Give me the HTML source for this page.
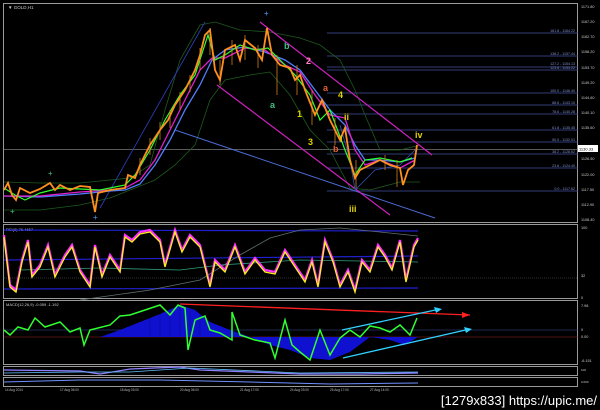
<!DOCTYPE html>
<html><head><meta charset="utf-8"><style>
html,body{margin:0;padding:0;background:#000;width:600px;height:410px;overflow:hidden}
svg{display:block}
text{font-family:"Liberation Sans",sans-serif}
</style></head><body>
<svg width="600" height="410" viewBox="0 0 600 410" xmlns="http://www.w3.org/2000/svg">
<rect width="600" height="410" fill="#000"/>
<g fill="none" stroke="#9a9a9a" stroke-width="1">
<rect x="3.5" y="3.5" width="574" height="219"/>
<rect x="3.5" y="224.5" width="574" height="74"/>
<rect x="3.5" y="300.5" width="574" height="64"/>
<rect x="3.5" y="366.5" width="574" height="9"/>
<rect x="3.5" y="377.5" width="574" height="9"/>
</g>
<text x="8" y="9" font-size="4.5" fill="#ccc">▼ GOLD,H1</text>
<line x1="4" y1="149.5" x2="578" y2="149.5" stroke="#777" stroke-width="0.7"/>
<g stroke="#4050a0" stroke-width="0.8">
<line x1="327" y1="33" x2="578" y2="33"/><line x1="327" y1="56" x2="578" y2="56"/>
<line x1="327" y1="67" x2="578" y2="67"/><line x1="327" y1="70" x2="578" y2="70"/>
<line x1="327" y1="93" x2="578" y2="93"/><line x1="327" y1="105" x2="578" y2="105"/>
<line x1="327" y1="114" x2="578" y2="114"/><line x1="327" y1="130" x2="578" y2="130"/>
<line x1="327" y1="142" x2="578" y2="142"/><line x1="327" y1="154" x2="578" y2="154"/>
<line x1="327" y1="168" x2="578" y2="168"/><line x1="327" y1="191" x2="578" y2="191"/>
</g>
<g font-size="3.6" fill="#8090d0" text-anchor="end">
<text x="575" y="32">161.8 - 1164.22</text><text x="575" y="55">138.2 - 1157.44</text>
<text x="575" y="65">127.2 - 1154.13</text><text x="575" y="69">123.6 - 1153.22</text>
<text x="575" y="92">100.0 - 1146.40</text><text x="575" y="104">88.6 - 1143.10</text>
<text x="575" y="113">78.6 - 1140.28</text><text x="575" y="129">61.8 - 1135.45</text>
<text x="575" y="141">50.0 - 1132.01</text><text x="575" y="153">38.2 - 1128.62</text>
<text x="575" y="167">23.6 - 1124.40</text><text x="575" y="190">0.0 - 1117.62</text>
</g>
<g font-size="3.8" fill="#ccc">
<text x="581" y="8">1171.80</text><text x="581" y="23">1167.20</text><text x="581" y="38">1162.70</text>
<text x="581" y="53">1158.20</text><text x="581" y="69">1153.70</text><text x="581" y="84">1149.20</text>
<text x="581" y="99">1144.60</text><text x="581" y="114">1140.10</text><text x="581" y="129">1135.60</text>
<text x="581" y="160">1126.50</text><text x="581" y="176">1122.00</text><text x="581" y="191">1117.50</text>
<text x="581" y="206">1112.90</text><text x="581" y="221">1108.40</text>
<text x="581" y="229">100</text><text x="581" y="277">32</text><text x="581" y="299">0</text>
<text x="581" y="307">7.98</text><text x="581" y="331">0</text><text x="581" y="338">0.00</text><text x="581" y="362">-6.151</text>
</g>
<rect x="578" y="145" width="20" height="7" fill="#fff"/>
<text x="579" y="150.5" font-size="4" fill="#000">1130.33</text>
<polyline fill="none" stroke="#1e5a1e" stroke-width="0.8" points="4,182 40,183 80,183 110,180 130,178 150,165 165,110 180,60 200,25 215,22 240,30 270,32 300,38 320,45 340,60 355,90 365,115 380,150 400,150 420,145"/>
<polyline fill="none" stroke="#1e5a1e" stroke-width="0.8" points="4,210 40,210 80,205 110,198 130,190 155,180 175,165 195,145 210,100 225,80 250,75 270,72 290,95 310,130 330,150 350,188 370,190 400,182 420,182"/>
<line x1="100" y1="208" x2="205" y2="22" stroke="#3040c0" stroke-width="0.8"/>
<line x1="175" y1="130" x2="435" y2="218" stroke="#4a6ad0" stroke-width="1"/>
<line x1="260" y1="22" x2="432" y2="155" stroke="#d020c0" stroke-width="1.2"/>
<line x1="217" y1="85" x2="390" y2="215" stroke="#d020c0" stroke-width="1.2"/>
<polyline fill="none" stroke="#3050b0" stroke-width="0.8" points="340,125 350,160 355,190 375,170 400,165 415,150"/>
<polyline fill="none" stroke="#5080ff" stroke-width="1.3" points="4,196 40,197 80,194 110,191 125,190 140,184 155,165 170,140 185,110 200,85 212,60 225,50 245,47 265,52 285,60 300,70 315,90 330,110 345,125 355,145 365,160 380,160 400,162 415,158"/>
<polyline fill="none" stroke="#e020d0" stroke-width="1.3" points="4,196 40,196 80,192 110,190 125,188 140,180 155,160 170,130 185,100 200,70 212,58 225,58 245,48 265,50 285,65 300,72 315,95 330,115 345,118 355,150 365,165 380,160 400,168 415,160"/>
<polyline fill="none" stroke="#30ff30" stroke-width="1.2" points="4,188 15,195 25,200 40,193 60,188 80,189 100,190 125,185 135,175 150,150 165,120 180,95 195,75 208,35 215,60 225,55 240,45 255,50 268,48 280,60 295,75 310,95 320,120 330,110 345,150 355,175 365,160 380,158 400,162 412,158"/>
<g stroke="#d08020" stroke-width="0.8">
<line x1="140" y1="158" x2="140" y2="175"/><line x1="150" y1="138" x2="150" y2="155"/><line x1="160" y1="122" x2="160" y2="140"/>
<line x1="170" y1="110" x2="170" y2="128"/><line x1="180" y1="92" x2="180" y2="110"/><line x1="190" y1="75" x2="190" y2="92"/>
<line x1="200" y1="48" x2="200" y2="70"/><line x1="210" y1="28" x2="210" y2="55"/><line x1="220" y1="60" x2="220" y2="85"/>
<line x1="232" y1="40" x2="232" y2="65"/><line x1="245" y1="35" x2="245" y2="60"/><line x1="258" y1="45" x2="258" y2="68"/>
<line x1="277" y1="55" x2="277" y2="95"/><line x1="297" y1="65" x2="297" y2="95"/><line x1="312" y1="90" x2="312" y2="125"/>
<line x1="335" y1="118" x2="335" y2="145"/><line x1="356" y1="160" x2="356" y2="188"/><line x1="385" y1="155" x2="385" y2="170"/>
<line x1="397" y1="160" x2="397" y2="187"/>
</g>
<polyline fill="none" stroke="#ff9020" stroke-width="1.8" points="4,190 8,183 12,195 16,200 20,188 30,193 40,189 50,183 55,190 60,185 70,190 80,186 90,187 95,212 98,193 110,190 125,188 128,175 135,178 140,165 150,145 160,130 168,120 175,105 185,90 195,70 200,55 205,35 210,30 215,70 220,80 225,50 235,45 240,60 245,40 255,48 262,60 267,28 272,55 280,65 290,68 295,80 300,75 305,90 315,115 322,100 330,120 340,140 345,128 350,160 355,178 360,170 370,165 380,160 390,165 400,168 403,185 408,170 414,165 417,145"/>
<g font-family="Liberation Serif,serif" font-size="9" font-weight="bold">
<text x="284" y="49" fill="#40c080">b</text><text x="270" y="108" fill="#40c080">a</text>
<text x="306" y="64" fill="#ff80c0">2</text><text x="297" y="117" fill="#e0d000">1</text>
<text x="308" y="145" fill="#e0d000">3</text><text x="323" y="91" fill="#e06030">a</text>
<text x="338" y="98" fill="#e0d000">4</text><text x="344" y="120" fill="#e0d000">ii</text>
<text x="340" y="142" fill="#e0d000">i</text><text x="333" y="152" fill="#e06030">b</text>
<text x="349" y="212" fill="#e0d000">iii</text><text x="415" y="138" fill="#e0d000">iv</text>
</g>
<text x="264" y="16" font-size="8" fill="#4aa0ff">+</text>
<text x="93" y="220" font-size="8" fill="#4aa0ff">+</text>
<text x="48" y="176" font-size="8" fill="#40c080">+</text>
<text x="10" y="214" font-size="8" fill="#40c080">+</text>
<text x="6" y="231" font-size="4" fill="#ccc">RSI(8) 76.4667</text>
<g stroke="#2020d0" stroke-width="1.2" fill="none">
<line x1="4" y1="230" x2="418" y2="231"/><line x1="4" y1="260" x2="418" y2="256"/>
<line x1="4" y1="289" x2="418" y2="288"/>
</g>
<line x1="4" y1="278" x2="578" y2="278" stroke="#666" stroke-dasharray="1,1" stroke-width="0.5"/>
<polyline fill="none" stroke="#607070" stroke-width="0.8" points="80,300 150,290 200,280 240,255 270,238 300,230 340,228 380,232 418,236"/>
<polyline fill="none" stroke="#30a080" stroke-width="0.8" points="20,270 100,268 180,270 220,265 300,260 418,262"/>
<polyline fill="none" stroke="#ff30ff" stroke-width="2.2" points="4,235 10,285 16,290 22,260 28,240 32,275 40,265 48,245 55,275 65,255 72,245 80,270 90,285 95,245 102,275 110,255 120,270 125,235 132,240 140,232 150,230 160,240 165,265 175,230 182,250 190,235 200,245 210,285 215,260 225,270 235,245 245,272 255,258 265,270 275,272 285,250 295,265 305,280 312,260 318,285 325,240 333,260 340,285 348,270 355,290 362,260 370,270 378,245 385,255 392,268 400,240 406,280 414,245 418,238"/>
<polyline fill="none" stroke="#ffee20" stroke-width="1.3" points="4,237 10,287 16,292 22,262 28,242 32,277 40,267 48,247 55,277 65,257 72,247 80,272 90,287 95,247 102,277 110,257 120,272 125,237 132,242 140,234 150,232 160,242 165,267 175,232 182,252 190,237 200,247 210,287 215,262 225,272 235,247 245,274 255,260 265,272 275,274 285,252 295,267 305,282 312,262 318,287 325,242 333,262 340,287 348,272 355,292 362,262 370,272 378,247 385,257 392,270 400,242 406,282 414,247 418,240"/>
<text x="6" y="306" font-size="4" fill="#ccc">MACD(12,26,9) -0.059 -1.192</text>
<line x1="4" y1="330" x2="578" y2="330" stroke="#4050a0" stroke-width="0.6"/>
<line x1="4" y1="337" x2="578" y2="337" stroke="#a02020" stroke-width="0.6"/>
<path d="M100,337 L120,330 L140,322 L160,314 L180,305 L195,310 L210,322 L230,330 L250,337 L270,345 L290,350 L310,358 L330,360 L350,352 L370,337 Z" fill="#1010d0"/>
<path d="M370,337 L390,340 L405,345 L418,337 Z" fill="#1010d0"/>
<g stroke="#000" stroke-width="0.4" opacity="0.5">
<line x1="150" y1="310" x2="150" y2="337"/><line x1="160" y1="310" x2="160" y2="337"/><line x1="170" y1="305" x2="170" y2="337"/>
<line x1="180" y1="305" x2="180" y2="337"/><line x1="190" y1="305" x2="190" y2="337"/><line x1="200" y1="310" x2="200" y2="337"/>
</g>
<polyline fill="none" stroke="#30ff30" stroke-width="1.5" points="4,330 10,335 18,327 28,330 35,318 45,327 60,322 70,332 80,328 84,345 90,330 110,325 120,316 130,315 145,310 160,305 170,315 178,305 185,308 188,350 195,320 205,316 210,330 220,333 232,340 232,312 240,335 255,340 270,343 275,358 285,320 292,345 300,352 310,360 320,330 330,355 340,338 350,330 360,337 370,326 380,328 390,332 400,325 410,335 417,318"/>
<g stroke-width="1.3" fill="none">
<line x1="180" y1="304" x2="470" y2="315" stroke="#ff2020"/>
<polygon points="470,315 462,312 462,318" fill="#ff2020" stroke="none"/>
<line x1="342" y1="330" x2="440" y2="309" stroke="#30d0ff"/>
<polygon points="442,309 434,307 436,313" fill="#30d0ff" stroke="none"/>
<line x1="343" y1="358" x2="470" y2="329" stroke="#30d0ff"/>
<polygon points="472,329 464,327 466,333" fill="#30d0ff" stroke="none"/>
</g>
<polyline fill="none" stroke="#9080ff" stroke-width="1.2" points="4,370 80,371 100,374 130,369 180,367 200,370 250,372 300,374 360,374 418,373"/>
<polyline fill="none" stroke="#60c0ff" stroke-width="0.8" points="4,373 80,372 130,372 190,368 300,373 418,372"/>
<polyline fill="none" stroke="#7090ff" stroke-width="1" points="4,382 80,380 160,380 250,382 330,384 418,383"/>
<g font-size="3" fill="#ccc"><text x="581" y="371">100</text><text x="581" y="383">0.000</text></g>
<g font-size="3.2" fill="#bbb">
<text x="5" y="391">14 Aug 2014</text><text x="60" y="391">17 Aug 06:00</text><text x="120" y="391">18 Aug 03:00</text>
<text x="180" y="391">20 Aug 06:00</text><text x="240" y="391">21 Aug 17:00</text><text x="290" y="391">24 Aug 03:00</text>
<text x="330" y="391">25 Aug 17:00</text><text x="370" y="391">27 Aug 14:00</text>
</g>
<text x="597" y="405" font-size="13" fill="#fff" text-anchor="end" font-family="DejaVu Sans,sans-serif">[1279x833] https://upic.me/</text>
</svg>
</body></html>
